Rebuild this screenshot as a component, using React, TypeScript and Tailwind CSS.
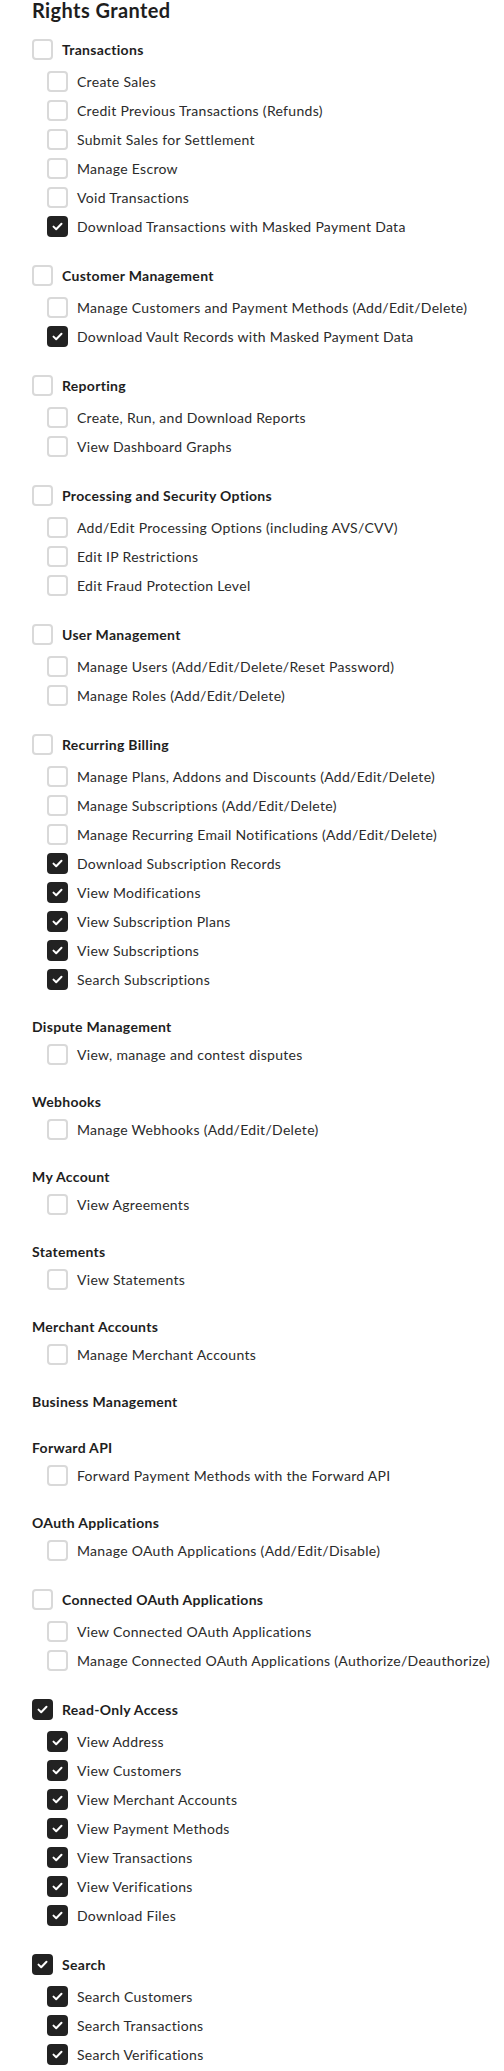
import React from "react";

type Right = { label: string; checked?: boolean };
type Group = {
  title: string;
  toggle?: boolean;
  checked?: boolean;
  items: Right[];
};

const groups: Group[] = [
  {
    title: "Transactions",
    toggle: true,
    items: [
      { label: "Create Sales" },
      { label: "Credit Previous Transactions (Refunds)" },
      { label: "Submit Sales for Settlement" },
      { label: "Manage Escrow" },
      { label: "Void Transactions" },
      { label: "Download Transactions with Masked Payment Data", checked: true },
    ],
  },
  {
    title: "Customer Management",
    toggle: true,
    items: [
      { label: "Manage Customers and Payment Methods (Add/Edit/Delete)" },
      { label: "Download Vault Records with Masked Payment Data", checked: true },
    ],
  },
  {
    title: "Reporting",
    toggle: true,
    items: [
      { label: "Create, Run, and Download Reports" },
      { label: "View Dashboard Graphs" },
    ],
  },
  {
    title: "Processing and Security Options",
    toggle: true,
    items: [
      { label: "Add/Edit Processing Options (including AVS/CVV)" },
      { label: "Edit IP Restrictions" },
      { label: "Edit Fraud Protection Level" },
    ],
  },
  {
    title: "User Management",
    toggle: true,
    items: [
      { label: "Manage Users (Add/Edit/Delete/Reset Password)" },
      { label: "Manage Roles (Add/Edit/Delete)" },
    ],
  },
  {
    title: "Recurring Billing",
    toggle: true,
    items: [
      { label: "Manage Plans, Addons and Discounts (Add/Edit/Delete)" },
      { label: "Manage Subscriptions (Add/Edit/Delete)" },
      { label: "Manage Recurring Email Notifications (Add/Edit/Delete)" },
      { label: "Download Subscription Records", checked: true },
      { label: "View Modifications", checked: true },
      { label: "View Subscription Plans", checked: true },
      { label: "View Subscriptions", checked: true },
      { label: "Search Subscriptions", checked: true },
    ],
  },
  { title: "Dispute Management", items: [{ label: "View, manage and contest disputes" }] },
  { title: "Webhooks", items: [{ label: "Manage Webhooks (Add/Edit/Delete)" }] },
  { title: "My Account", items: [{ label: "View Agreements" }] },
  { title: "Statements", items: [{ label: "View Statements" }] },
  { title: "Merchant Accounts", items: [{ label: "Manage Merchant Accounts" }] },
  { title: "Business Management", items: [] },
  { title: "Forward API", items: [{ label: "Forward Payment Methods with the Forward API" }] },
  { title: "OAuth Applications", items: [{ label: "Manage OAuth Applications (Add/Edit/Disable)" }] },
  {
    title: "Connected OAuth Applications",
    toggle: true,
    items: [
      { label: "View Connected OAuth Applications" },
      { label: "Manage Connected OAuth Applications (Authorize/Deauthorize)" },
    ],
  },
  {
    title: "Read-Only Access",
    toggle: true,
    checked: true,
    items: [
      { label: "View Address", checked: true },
      { label: "View Customers", checked: true },
      { label: "View Merchant Accounts", checked: true },
      { label: "View Payment Methods", checked: true },
      { label: "View Transactions", checked: true },
      { label: "View Verifications", checked: true },
      { label: "Download Files", checked: true },
    ],
  },
  {
    title: "Search",
    toggle: true,
    checked: true,
    items: [
      { label: "Search Customers", checked: true },
      { label: "Search Transactions", checked: true },
      { label: "Search Verifications", checked: true },
    ],
  },
];

function Box({ checked = false }: { checked?: boolean }) {
  if (checked) {
    return (
      <span className="flex h-[21px] w-[21px] shrink-0 items-center justify-center rounded-[4px] bg-[#222222]">
        <svg width="11" height="9" viewBox="0 0 11 9" fill="none">
          <path
            d="M1.5 4.6L4.2 7.2L9.5 1.8"
            stroke="white"
            strokeWidth="2"
            strokeLinecap="round"
            strokeLinejoin="round"
          />
        </svg>
      </span>
    );
  }
  return (
    <span className="h-[21px] w-[21px] shrink-0 rounded-[4px] border-2 border-[#d9d9d9] bg-white" />
  );
}

function RightsGroup({ group }: { group: Group }) {
  return (
    <li className="flex flex-col">
      {group.toggle ? (
        <div className="flex h-[21px] items-center gap-[9px]">
          <Box checked={group.checked} />
          <span className="text-[14px] font-bold tracking-[0.3px] text-[#1e1e1e]">{group.title}</span>
        </div>
      ) : (
        <div className="text-[14px] leading-[18px] font-bold tracking-[0.3px] text-[#1e1e1e]">
          {group.title}
        </div>
      )}
      {group.items.length > 0 && (
        <ul className={group.toggle ? "mt-[11px] flex flex-col gap-2 pl-[15px]" : "mt-2 flex flex-col gap-2 pl-[15px]"}>
          {group.items.map((item) => (
            <li key={item.label} className="flex h-[21px] items-center gap-[9px]">
              <Box checked={item.checked} />
              <span className="whitespace-nowrap text-[14px] tracking-[0.3px] text-[#2b2b2b]">{item.label}</span>
            </li>
          ))}
        </ul>
      )}
    </li>
  );
}

export default function App() {
  return (
    <div className="min-h-[2071px] bg-white pl-8 font-['Lato',sans-serif]">
      <h2 className="text-[20px] leading-[20px] font-bold tracking-[0.4px] text-[#1e1e1e]">Rights Granted</h2>
      <ul className="mt-[19px] flex flex-col gap-7">
        {groups.map((group) => (
          <RightsGroup key={group.title} group={group} />
        ))}
      </ul>
    </div>
  );
}
